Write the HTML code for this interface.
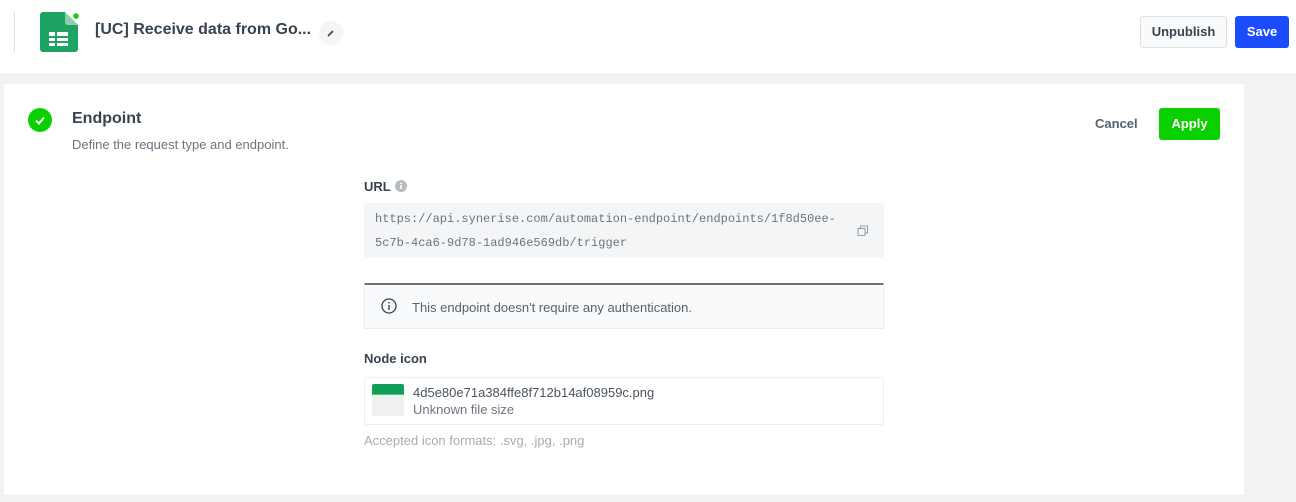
<!DOCTYPE html>
<html><head><style>
*{margin:0;padding:0;box-sizing:border-box}
body{width:1296px;height:502px;background:#f0f2f4;font-family:"Liberation Sans",sans-serif;color:#384350;position:relative;overflow:hidden}
.hdr{position:absolute;left:0;top:0;width:1296px;height:75px;background:#fff;border-bottom:1px solid #e6e9ec}
.card{position:absolute;left:4px;top:84px;width:1240px;height:411px;background:#fff}
.abs{position:absolute}
.btn{position:absolute;border-radius:3px;font-size:13px;font-weight:bold;text-align:center}
</style></head><body>
<div class="hdr">
 <div class="abs" style="left:14px;top:12px;width:1px;height:40px;background:#dbe0e3"></div>
 <svg class="abs" style="left:40px;top:12px" width="40" height="42" viewBox="0 0 40 42">
  <path d="M3 0H25L38 13V37a3 3 0 0 1-3 3H3a3 3 0 0 1-3-3V3a3 3 0 0 1 3-3z" fill="#1ea362"/>
  <path d="M25 0L38 13H28a3 3 0 0 1-3-3z" fill="#8ed1b1"/>
  <rect x="9" y="20" width="19" height="14" fill="#fff"/>
  <g stroke="#1ea362" stroke-width="2"><line x1="9" y1="25" x2="28" y2="25"/><line x1="9" y1="30" x2="28" y2="30"/><line x1="16" y1="20" x2="16" y2="34"/></g>
  <circle cx="36" cy="4" r="3.5" fill="#0bd000" stroke="#fff" stroke-width="1.5"/>
 </svg>
 <div class="abs" style="left:95px;top:21px;font-size:16px;font-weight:bold;color:#384350;white-space:nowrap">[UC] Receive data from Go...</div>
 <div class="abs" style="left:319px;top:21px;width:24px;height:24px;border-radius:50%;background:#f3f5f6"></div>
 <svg class="abs" style="left:325px;top:27px" width="12" height="12"><path d="M3 9L8 4" stroke="#384350" stroke-width="1.6"/></svg>
 <div class="btn" style="left:1140px;top:16px;width:87px;height:32px;line-height:30px;border:1px solid #dbe0e3;background:#f9fafb;color:#384350">Unpublish</div>
 <div class="btn" style="left:1235px;top:16px;width:54px;height:32px;line-height:32px;background:#1b4dff;color:#fff">Save</div>
</div>
<div class="card">
 <svg class="abs" style="left:24px;top:24px" width="24" height="24"><circle cx="12" cy="12" r="12" fill="#0bd000"/><path d="M8 12.5l3 3 5-6" stroke="#fff" stroke-width="2" fill="none"/></svg>
 <div class="abs" style="left:68px;top:26px;font-size:16px;font-weight:bold;color:#384350">Endpoint</div>
 <div class="abs" style="left:68px;top:53px;font-size:13px;color:#6a7580">Define the request type and endpoint.</div>
 <div class="abs" style="left:1091px;top:32px;font-size:13px;font-weight:bold;color:#57616d">Cancel</div>
 <div class="btn" style="left:1155px;top:24px;width:61px;height:32px;line-height:32px;background:#0bd000;color:#fff">Apply</div>
 <div class="abs" style="left:360px;top:95px;font-size:13px;font-weight:bold">URL</div>
 <svg class="abs" style="left:391px;top:96px" width="12" height="12"><circle cx="6" cy="6" r="6" fill="#b5bdc3"/><rect x="5.2" y="5" width="1.6" height="4" fill="#fff"/><rect x="5.2" y="2.7" width="1.6" height="1.5" fill="#fff"/></svg>
 <div class="abs" style="left:360px;top:119px;width:520px;height:55px;background:#f3f5f6;border-radius:3px"></div>
 <div class="abs" style="left:371px;top:123px;font-family:'Liberation Mono',monospace;font-size:12px;line-height:24px;color:#6a7580">https://api.synerise.com/automation-endpoint/endpoints/1f8d50ee-<br>5c7b-4ca6-9d78-1ad946e569db/trigger</div>
 <svg class="abs" style="left:852px;top:140px" width="14" height="14"><rect x="2" y="4.5" width="7" height="7" fill="none" stroke="#949ea6"/><path d="M4.5 4.5V2h7v7H9" fill="none" stroke="#949ea6"/></svg>
 <div class="abs" style="left:360px;top:199px;width:520px;height:46px;background:#f9fafb;border:1px solid #e9edee;border-top:2px solid #6a7580"></div>
 <svg class="abs" style="left:377px;top:214px" width="16" height="16"><circle cx="8" cy="8" r="7" fill="none" stroke="#384350" stroke-width="1.3"/><rect x="7.3" y="7" width="1.4" height="5" fill="#384350"/><rect x="7.3" y="4" width="1.4" height="1.5" fill="#384350"/></svg>
 <div class="abs" style="left:408px;top:216px;font-size:13px;color:#57616d">This endpoint doesn't require any authentication.</div>
 <div class="abs" style="left:360px;top:267px;font-size:13px;font-weight:bold">Node icon</div>
 <div class="abs" style="left:360px;top:293px;width:520px;height:48px;border:1px solid #e9edee;border-radius:3px"></div>
 <div class="abs" style="left:368px;top:300px;width:32px;height:32px;background:#f0f0f0;border-radius:2px;overflow:hidden"><div style="height:11px;background:#0f9d58;border-bottom:1px solid #2ed37d"></div></div>
 <div class="abs" style="left:409px;top:301px;font-size:13px;color:#4a5360">4d5e80e71a384ffe8f712b14af08959c.png</div>
 <div class="abs" style="left:409px;top:318px;font-size:13px;color:#6a7580">Unknown file size</div>
 <div class="abs" style="left:360px;top:349px;font-size:13px;color:#a5adb3">Accepted icon formats: .svg, .jpg, .png</div>
</div>
</body></html>
